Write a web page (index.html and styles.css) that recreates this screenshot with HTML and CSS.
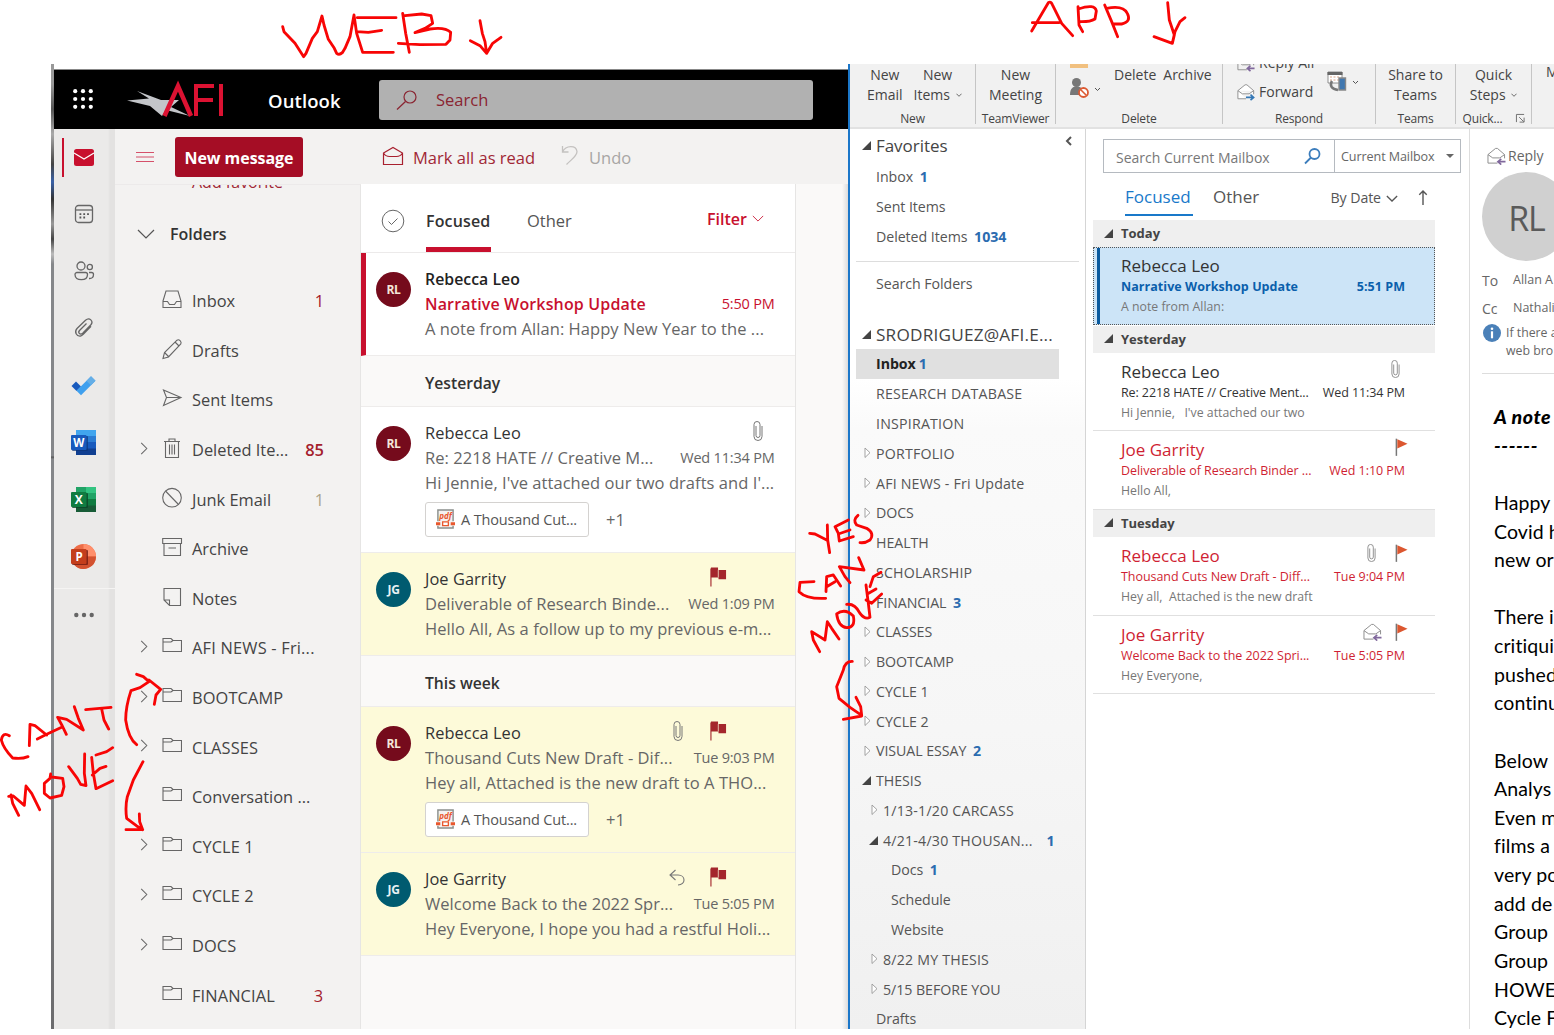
FILE: index.html
```html
<!DOCTYPE html>
<html lang="en">
<head>
<meta charset="utf-8">
<title>Outlook web and app</title>
<link rel="stylesheet" href="styles.css">
</head>
<body>
<svg class="defs" aria-hidden="true">
  <symbol id="folder" viewBox="0 0 20 20"><path d="M1 15.500V2.500h8l2 2h8.500v11zM1 6h8l2-1.500"/></symbol>
  <symbol id="right" viewBox="0 0 8 14"><path d="M1 1l6 6-6 6"/></symbol>
  <symbol id="clip" viewBox="0 0 10 20"><path d="M3 5v9.500a2 2 0 0 0 4 0V3.500a2.500 2.500 0 0 0-6 0v12a4 4 0 0 0 8 0V5"/></symbol>
  <symbol id="flags" viewBox="0 0 18 20"><path d="M1 1v19" fill="none" stroke="#a4262c" stroke-width="1.200"/><path d="M1 0h7.500v2.500H17v10H9V10.500H1z" fill="#a4262c"/><path d="M8.800 2.500v8" stroke="#e9c9b4" stroke-width="1"/></symbol>
  <symbol id="flag" viewBox="0 0 14 19"><path d="M1.500 0v18.500" stroke="#777" stroke-width="1.600"/><path d="M2.500.5L13.500 5.500 2.500 10.500z" fill="#dc5730"/></symbol>
  <symbol id="pdf" viewBox="0 0 20 21"><path d="M2 1h16v19H2z" fill="#f4f2f0"/><path d="M2 13V1h16v12M2 17.500V20h16v-2.500" fill="none" stroke="#8a8f8c" stroke-width="1.500"/><path d="M0 15.500h4.500M15.500 15.500H20" stroke="#e8582e" stroke-width="3"/><path d="M7 13.500h6v4H7z" fill="#fff" stroke="#e8582e" stroke-width="1.400"/><text x="3.500" y="10" font-size="8.500" font-weight="700" font-style="italic" fill="#e8582e" stroke="none" textLength="13">pdf</text></symbol>
  <symbol id="envreply" viewBox="0 0 20 19"><path d="M1 8v9h10M1 8l8-6.500h2L18.500 8v4M1 8l5 3.500h7.500l5-3.500" fill="none" stroke="#8a8a8a"/><path d="M19.500 15.500H12m3-3l-3.500 3 3.500 3" fill="none" stroke="#80689c" stroke-width="1.800"/></symbol>
  <symbol id="closed" viewBox="0 0 7 12"><path d="M1 1v9.500L6 5.700z" fill="#fff" stroke="#999" stroke-width=".9"/></symbol>
  <symbol id="open" viewBox="0 0 10 10"><path d="M10 0v10H0z" fill="#444"/></symbol>
  <symbol id="down" viewBox="0 0 14 8"><path d="M1 1l6 6 6-6"/></symbol>
</svg>

<div class="stage">
<section class="web">
  <header class="web-head">
    <svg class="waffle" viewBox="0 0 20 20"><g fill="#fff"><circle cx="2.200" cy="2.200" r="2.100"/><circle cx="10" cy="2.200" r="2.100"/><circle cx="17.800" cy="2.200" r="2.100"/><circle cx="2.200" cy="10" r="2.100"/><circle cx="10" cy="10" r="2.100"/><circle cx="17.800" cy="10" r="2.100"/><circle cx="2.200" cy="17.800" r="2.100"/><circle cx="10" cy="17.800" r="2.100"/><circle cx="17.800" cy="17.800" r="2.100"/></g></svg>
    <svg class="afi" viewBox="0 0 97 34"><path d="M0 17.500L22 15.500 10 8l24 9h18l-8 7 19 9-24-6-4 6-12-10z" fill="#c3c5c9"/><g fill="none" stroke="#dc1232" stroke-width="4"><path d="M37.500 33L51 3l13 30" stroke-width="4.500"/><path d="M69 33V3h18M69 17h17M94 1v32"/></g></svg>
    <strong class="brand">Outlook</strong>
    <div class="search"><svg viewBox="0 0 21 20"><circle cx="14" cy="7" r="6"/><path d="M9.500 11.500L1 19.500"/></svg><span>Search</span></div>
  </header>
  <div class="web-body">
    <nav class="rail">
      <span class="on"><svg viewBox="0 0 20 17"><rect width="20" height="17" rx="2.500" fill="#c8102e"/><path d="M0 4l10 6 10-6" fill="none" stroke="#fff" stroke-width="1.200"/></svg></span>
      <span><svg viewBox="0 0 20 20"><g fill="none" stroke="#666" stroke-width="1.300"><rect x="1.500" y="1.500" width="17" height="17" rx="3"/><path d="M1.500 6h17"/></g><path d="M5.500 10.200h9.500M5.500 13.500h6" stroke="#555" stroke-width="1.800" stroke-dasharray="1.800 2"/></svg></span>
      <span><svg viewBox="0 0 20 20"><g fill="none" stroke="#666" stroke-width="1.300"><circle cx="7" cy="5" r="4"/><circle cx="15.800" cy="6" r="2.600"/><path d="M3 11.500h8.500a2 2 0 0 1 2 2c0 3.500-2.500 5.200-6.200 5.200S1 17 1 13.500a2 2 0 0 1 2-2zM15 11.500h2.500a2 2 0 0 1 2 2c0 2.800-1.500 4.200-4.500 4"/></g></svg></span>
      <span><svg viewBox="0 0 20 20"><path d="M3 10.500l8.500-8.300c4-3.500 8.500 1 5.200 4.800l-8 8.200c-2.500 2.300-5.200-.5-3.200-2.700l7-7M3 10.500c-3 3.500-.5 8 3.500 7.500 1.500-.3 2-1 3-2l7.500-7.700" fill="none" stroke="#666" stroke-width="1.300"/></svg></span>
      <span class="big"><svg viewBox="0 0 25 25"><path d="M.5 13l4.500-4.500 5 5-4.500 4.500z" fill="#185abd"/><path d="M5.500 17.700L20 3.300l4.500 4.500L10 22.300z" fill="#3fa0ee"/><path d="M15.500 8L20 3.300l4.500 4.500L20 12.300z" fill="#65aee6"/></svg></span>
      <span class="big"><svg viewBox="0 0 25 25"><path d="M5 0h20v7H5z" fill="#41a5ee"/><path d="M5 6h20v7H5z" fill="#2b7cd3"/><path d="M5 12h20v7H5z" fill="#185abd"/><path d="M5 18.500h20V25H5z" fill="#103f91"/><rect x="1" y="6" width="16" height="15" rx="1" fill="#0d3578" opacity=".7"/><rect y="5" width="15.500" height="15" rx="1" fill="#185abd"/><text x="7.700" y="16.700" font-size="11.500" text-anchor="middle" font-weight="700" fill="#fff">W</text></svg></span>
      <span class="big"><svg viewBox="0 0 25 25"><path d="M5 0h10v13H5z" fill="#21a366"/><path d="M15 0h10v7H15z" fill="#33c481"/><path d="M15 6h10v7H15z" fill="#21a366"/><path d="M5 12h20v7H5z" fill="#107c41"/><path d="M5 18.500h20V25H5z" fill="#185c37"/><rect x="1" y="6" width="16" height="15" rx="1" fill="#0b4527" opacity=".8"/><rect y="5" width="15.500" height="15" rx="1" fill="#107c41"/><text x="7.700" y="16.900" font-size="12" text-anchor="middle" font-weight="700" fill="#fff">X</text></svg></span>
      <span class="big"><svg viewBox="0 0 25 25"><circle cx="12.500" cy="12.500" r="12.500" fill="#ed6c47"/><path d="M12.500 0A12.500 12.500 0 0 1 25 12.500H12.500z" fill="#ff8f6b"/><path d="M25 12.500a12.500 12.500 0 0 1-22 8V12.500z" fill="#d35230"/><rect x="1" y="6" width="16" height="15" rx="1" fill="#701a12" opacity=".8"/><rect y="5" width="15.500" height="15" rx="1" fill="#c43e1c"/><text x="8" y="16.800" font-size="11.500" text-anchor="middle" font-weight="700" fill="#fff">P</text></svg></span>
      <span class="more"><svg viewBox="0 0 20 6"><g fill="#666"><circle cx="2.300" cy="3" r="2.200"/><circle cx="10" cy="3" r="2.200"/><circle cx="17.700" cy="3" r="2.200"/></g></svg></span>
    </nav>
    <div class="mail">
      <div class="toolbar">
        <svg class="burger" viewBox="0 0 18 12"><path d="M0 1.500h18M0 6h18M0 10.500h18"/></svg>
        <span class="newmsg">New message</span>
        <svg class="mark" viewBox="0 0 22 20"><path d="M1.500 7L11 1.500 20.500 7v11.500h-19zM1.500 7c2 3.500 4 3.500 6 3.500h7c2 0 4 0 6-3.500"/></svg>
        <span class="tl">Mark all as read</span>
        <svg class="undo" viewBox="0 0 18 20"><path d="M1.500 1v6h6M1.500 7C5 0 15 0 16 6.500 16 11 12 13 5.500 19.500"/></svg>
        <span class="tl dim">Undo</span>
      </div>
      <div class="cols">
        <div class="folders">
          <div class="addfav">Add favorite</div>
          <div class="fhead"><svg viewBox="0 0 18 10"><path d="M1 1l8 8 8-8"/></svg><b>Folders</b></div>
          <div class="f"><i></i><svg viewBox="0 0 20 20"><path d="M1 12L4 2h12l3 10v6.500H1zM1 12.500h4.500l2 3h5l2-3H19"/></svg><span>Inbox</span><em>1</em></div>
          <div class="f"><i></i><svg viewBox="0 0 20 20"><path d="M1 19.500l1.500-6L15 1.200c2-1.500 5 1.500 3.800 3.800L6.500 18zM13 3l4 4M2.500 13.500l4.500 4.500"/></svg><span>Drafts</span></div>
          <div class="f"><i></i><svg viewBox="0 0 20 20"><path d="M1.500 2L19 9.500 1.500 17.500l3-8zM4.500 9.500H19"/></svg><span>Sent Items</span></div>
          <div class="f"><i><svg><use href="#right"/></svg></i><svg viewBox="0 0 20 20"><path d="M2 3.500h16M7 3.500v-2.500h6v2.500M3.500 3.500v16h13v-16M7.500 6.500v10M10 6.500v10M12.500 6.500v10"/></svg><span>Deleted Ite...</span><em class="b">85</em></div>
          <div class="f"><i></i><svg viewBox="0 0 20 20"><circle cx="10" cy="9.700" r="9.300"/><path d="M3.500 3l13 13.500"/></svg><span>Junk Email</span><em class="pale">1</em></div>
          <div class="f"><i></i><svg viewBox="0 0 20 20"><path d="M.7 1.500h18.800v5H.7zM2 6.500v12h16.500v-12M6.500 11h7.500"/></svg><span>Archive</span></div>
          <div class="f"><i></i><svg viewBox="0 0 20 20"><path d="M2 1.500h16.500v17H7.500L2 13zM2 13h5.500v5.500"/></svg><span>Notes</span></div>
          <div class="f"><i><svg><use href="#right"/></svg></i><svg><use href="#folder"/></svg><span class="wide">AFI NEWS - Fri...</span></div>
          <div class="f"><i><svg><use href="#right"/></svg></i><svg><use href="#folder"/></svg><span class="caps">BOOTCAMP</span></div>
          <div class="f"><i><svg><use href="#right"/></svg></i><svg><use href="#folder"/></svg><span class="caps">CLASSES</span></div>
          <div class="f"><i></i><svg><use href="#folder"/></svg><span>Conversation ...</span></div>
          <div class="f"><i><svg><use href="#right"/></svg></i><svg><use href="#folder"/></svg><span class="caps">CYCLE 1</span></div>
          <div class="f"><i><svg><use href="#right"/></svg></i><svg><use href="#folder"/></svg><span class="caps">CYCLE 2</span></div>
          <div class="f"><i><svg><use href="#right"/></svg></i><svg><use href="#folder"/></svg><span class="caps">DOCS</span></div>
          <div class="f"><i></i><svg><use href="#folder"/></svg><span class="caps">FINANCIAL</span><em class="in">3</em></div>
        </div>
        <div class="list">
          <div class="tabs"><svg class="chk" viewBox="0 0 24 24"><circle cx="12" cy="12" r="10.800"/><path d="M7.500 12.500l3 3 6-6"/></svg><b class="sel">Focused</b><span class="oth">Other</span><b class="filter">Filter <svg><use href="#down"/></svg></b></div>
          <article class="m new"><div class="av">RL</div><div class="t"><div><span class="name semi">Rebecca Leo</span></div><div><span class="sub">Narrative Workshop Update</span><time>5:50 PM</time></div><p>A note from Allan: Happy New Year to the ...</p></div></article>
          <div class="band">Yesterday</div>
          <article class="m tall"><div class="av">RL</div><div class="t"><div><span class="name">Rebecca Leo</span><svg class="clip last"><use href="#clip"/></svg></div><div><span>Re: 2218 HATE // Creative M...</span><time>Wed 11:34 PM</time></div><p>Hi Jennie, I've attached our two drafts and I'...</p><div class="att"><span><svg><use href="#pdf"/></svg>A Thousand Cut...</span>+1</div></div></article>
          <article class="m y"><div class="av jg">JG</div><div class="t"><div><span class="name">Joe Garrity</span><svg class="flags"><use href="#flags"/></svg></div><div><span>Deliverable of Research Binde...</span><time>Wed 1:09 PM</time></div><p>Hello All, As a follow up to my previous e-m...</p></div></article>
          <div class="band">This week</div>
          <article class="m y tall"><div class="av">RL</div><div class="t"><div><span class="name">Rebecca Leo</span><svg class="clip"><use href="#clip"/></svg><svg class="flags"><use href="#flags"/></svg></div><div><span>Thousand Cuts New Draft - Dif...</span><time>Tue 9:03 PM</time></div><p>Hey all, Attached is the new draft to A THO...</p><div class="att"><span><svg><use href="#pdf"/></svg>A Thousand Cut...</span>+1</div></div></article>
          <article class="m y"><div class="av jg">JG</div><div class="t"><div><span class="name">Joe Garrity</span><svg class="back" viewBox="0 0 16 17"><path d="M6.500 1L1 6l5.500 5M1 6h8c8 0 8 10 0 10"/></svg><svg class="flags"><use href="#flags"/></svg></div><div><span>Welcome Back to the 2022 Spr...</span><time>Tue 5:05 PM</time></div><p>Hey Everyone, I hope you had a restful Holi...</p></div></article>
        </div>
        <div class="gutter"></div>
      </div>
    </div>
  </div>
</section>

<section class="app">
  <div class="ribbon">
    <div class="g g1"><div class="gb"><span>New<br>Email</span><span class="it">New<br>Items <svg><use href="#down"/></svg></span></div><small>New</small></div>
    <div class="g g2"><div class="gb"><span>New<br>Meeting</span></div><small>TeamViewer</small></div>
    <div class="g g3"><div class="gb"><svg class="ign" viewBox="0 0 34 36"><path d="M1 0h18v4H1z" fill="#f1c07f"/><circle cx="7.500" cy="18.500" r="4.500" fill="#777"/><path d="M1 31c0-7 3-8.500 7-8.500s6 2 6 8.500z" fill="#777"/><circle cx="14.500" cy="28.500" r="4.500" fill="#fff" stroke="#dc5a33" stroke-width="1.800"/><path d="M11.500 25.500l6 6" stroke="#dc5a33" stroke-width="1.600"/><path d="M26 24l2.500 2.500L31 24" fill="none" stroke="#555"/></svg><span>Delete</span><span>Archive</span></div><small>Delete</small></div>
    <div class="g g4"><div class="gb"><div class="rf"><p><svg><use href="#envreply"/></svg>Reply All</p><p><svg viewBox="0 0 20 19"><path d="M1 8v9h9M1 8l8-6.500h2L18.500 8v4M1 8l5 3.500h7.500l5-3.500" fill="#fff" stroke="#8a8a8a"/><path d="M10 15.500h8m-3-3l3.500 3-3.500 3" fill="none" stroke="#3377b5" stroke-width="1.800"/></svg>Forward</p></div><svg class="mt" viewBox="0 0 34 22"><path d="M1 1h14v11H1z" fill="#fff" stroke="#777" stroke-width=".8"/><path d="M.5 2.500h15" stroke="#666" stroke-width="3"/><path d="M3 6h10M3 9h10" stroke="#e0a98c" stroke-width="1.200" stroke-dasharray="2 1.500"/><path d="M5 10c-3 5 0 8 6 9" fill="none" stroke="#777" stroke-width="2.500"/><path d="M12 7h6.500v12H12z" fill="#4178b0" stroke="#888" stroke-width="1.400"/><path d="M26 10l2.500 2.500L31 10" fill="none" stroke="#555"/></svg></div><small>Respond</small></div>
    <div class="g g5"><div class="gb"><span>Share to<br>Teams</span></div><small>Teams</small></div>
    <div class="g g6"><div class="gb"><span>Quick<br>Steps <svg><use href="#down"/></svg></span></div><small>Quick... <svg class="dlg" viewBox="0 0 10 10"><path d="M.5 9V.5H9M3.500 3.500l5 5M9 4v5H4" fill="none" stroke="#666"/></svg></small></div>
    <div class="g g7">M</div>
  </div>
  <div class="app-body">
    <nav class="tree">
      <div class="big"><svg class="o"><use href="#open"/></svg>Favorites<svg class="col" viewBox="0 0 7 10"><path d="M6 1L2 5l4 4" fill="none" stroke="#555" stroke-width="2"/></svg></div>
      <div>Inbox <b>1</b></div><div>Sent Items</div><div>Deleted Items <b>1034</b></div>
      <hr>
      <div class="sf">Search Folders</div>
      <div class="big acct"><svg class="o"><use href="#open"/></svg>SRODRIGUEZ@AFI.E...</div>
      <div class="cur"><strong>Inbox</strong> <b>1</b></div>
      <div class="u">RESEARCH DATABASE</div><div class="u">INSPIRATION</div>
      <div class="u"><svg class="c"><use href="#closed"/></svg>PORTFOLIO</div>
      <div class="u"><svg class="c"><use href="#closed"/></svg>AFI NEWS - Fri Update</div>
      <div><svg class="c"><use href="#closed"/></svg>DOCS</div>
      <div>HEALTH</div><div class="u">SCHOLARSHIP</div><div>FINANCIAL <b>3</b></div>
      <div><svg class="c"><use href="#closed"/></svg>CLASSES</div>
      <div><svg class="c"><use href="#closed"/></svg>BOOTCAMP</div>
      <div><svg class="c"><use href="#closed"/></svg>CYCLE 1</div>
      <div><svg class="c"><use href="#closed"/></svg>CYCLE 2</div>
      <div><svg class="c"><use href="#closed"/></svg>VISUAL ESSAY <b>2</b></div>
      <div><svg class="o"><use href="#open"/></svg>THESIS</div>
      <div class="l1 u"><svg class="c"><use href="#closed"/></svg>1/13-1/20 CARCASS</div>
      <div class="l1 u"><svg class="o"><use href="#open"/></svg>4/21-4/30 THOUSAN... <b class="far">1</b></div>
      <div class="l2">Docs <b>1</b></div><div class="l2">Schedule</div><div class="l2">Website</div>
      <div class="l1 u"><svg class="c"><use href="#closed"/></svg>8/22 MY THESIS</div>
      <div class="l1"><svg class="c"><use href="#closed"/></svg>5/15 BEFORE YOU</div>
      <div>Drafts</div>
    </nav>
    <div class="inbox">
      <div class="sbox"><span>Search Current Mailbox</span><svg viewBox="0 0 17 17"><circle cx="10.500" cy="6" r="5"/><path d="M7 9.500L1 15.500"/></svg><div>Current Mailbox<i></i></div></div>
      <div class="atabs"><b>Focused</b><span>Other</span><em>By Date</em><svg class="dn"><use href="#down"/></svg><svg class="up" viewBox="0 0 10 16"><path d="M5 16V1M1 5l4-4 4 4"/></svg></div>
      <div class="aband"><svg><use href="#open"/></svg>Today</div>
      <article class="a picked"><div class="n">Rebecca Leo</div><div class="s"><span>Narrative Workshop Update</span><time>5:51 PM</time></div><p>A note from Allan:</p></article>
      <div class="aband"><svg><use href="#open"/></svg>Yesterday</div>
      <article class="a"><div class="n">Rebecca Leo<svg class="ac end"><use href="#clip"/></svg></div><div class="s"><span>Re: 2218 HATE // Creative Ment...</span><time>Wed 11:34 PM</time></div><p>Hi Jennie, &nbsp; I've attached our two</p></article>
      <article class="a red"><div class="n">Joe Garrity<svg class="af"><use href="#flag"/></svg></div><div class="s"><span>Deliverable of Research Binder ...</span><time>Wed 1:10 PM</time></div><p>Hello All,</p></article>
      <div class="aband"><svg><use href="#open"/></svg>Tuesday</div>
      <article class="a red"><div class="n">Rebecca Leo<svg class="ac"><use href="#clip"/></svg><svg class="af"><use href="#flag"/></svg></div><div class="s"><span>Thousand Cuts New Draft - Diff...</span><time>Tue 9:04 PM</time></div><p>Hey all,&nbsp; Attached is the new draft</p></article>
      <article class="a red"><div class="n">Joe Garrity<svg class="ae"><use href="#envreply"/></svg><svg class="af"><use href="#flag"/></svg></div><div class="s"><span>Welcome Back to the 2022 Spri...</span><time>Tue 5:05 PM</time></div><p>Hey Everyone,</p></article>
    </div>
    <div class="read">
      <div class="rp"><svg><use href="#envreply"/></svg>Reply</div>
      <div class="face">RL</div>
      <div class="to"><span>To</span>Allan A</div>
      <div class="to cc"><span>Cc</span>Nathali</div>
      <div class="info"><svg viewBox="0 0 18 18"><circle cx="9" cy="9" r="9" fill="#4a80b8"/><circle cx="9" cy="4.700" r="1.300" fill="#fff"/><path d="M9 7.300v7" stroke="#fff" stroke-width="2.200"/></svg><p>If there a<br>web bro</p></div>
      <div class="msg"><strong>A note<br>------</strong><br><br>Happy<br>Covid h<br>new or<br><br>There i<br>critiqui<br>pushed<br>continu<br><br>Below<br>Analys<br>Even m<br>films a<br>very po<br>add de<br>Group<br>Group<br>HOWE<br>Cycle F</div>
    </div>
  </div>
</section>
</div>

<svg class="ink" viewBox="0 0 1554 1035">
  <g transform="scale(.33333)">
    <path d="M848 80L852 95 885 130 911 170 918 160 937 115 952 95 966 48 972 75 985 118 1003 145 1010 160Q1018 166 1027 158L1035 145 1050 110 1062 45 1070 100 1088 157H1180M1072 53H1188M1070 95L1105 97 1145 91M1208 40L1217 100 1228 157M1215 47L1265 42 1293 47 1298 70 1275 85 1245 98 1290 87Q1335 80 1352 97L1350 120 1338 133 1260 134 1195 130"/>
    <path d="M1440 62L1447 100 1455 125 1460 160M1411 122L1440 137 1460 160 1478 130 1503 112"/>
  </g>
  <g transform="translate(840 0) scale(.33333)">
    <path d="M575 93L605 42 625 8Q632 3 637 14L665 70 698 107M577 68H657M714 20L717 75 728 95M715 27Q765 10 769 33L765 57Q750 66 720 65M794 15L815 65 833 110M800 25Q850 15 862 40 875 65 845 72H820M983 8L988 60 1003 105 997 130M942 110L997 130 1005 95 1020 65 1035 53"/>
  </g>
  <g transform="translate(0 640) scale(.33333)">
    <path d="M28 287Q8 275 4 300 10 325 38 354 65 358 84 350M88 317L90 253 105 257 140 285M112 297L140 283 185 262M199 283L187 258 173 232 200 238 250 270 235 235 223 200M257 209L333 202M305 207L312 240 326 267M56 526L38 490 33 465M26 469L40 468 73 496 78 438 95 460 119 509M152 402L150 415 133 430V460L150 474 185 466 192 440 188 415 155 411M206 380L232 415 242 433 258 437 253 400 254 342M275 352L280 400 288 446 338 422M277 405L300 385 318 379M288 345L320 335 338 323"/>
    <path d="M410 314Q385 295 377 240 377 200 393 152L420 143 447 125 430 110 410 103M447 120L482 148 468 165 463 193M429 365L400 420 382 470Q375 500 380 535L410 558 428 569H378M428 569L419 545 418 522"/>
  </g>
  <g transform="translate(790 310) scale(.33333)">
    <path d="M59 670L75 672 110 690M112 645L113 690 119 728M175 630L135 650 145 670 148 693 190 680M145 672L180 660M204 616Q187 630 200 645L230 655Q255 670 240 690 225 700 210 698M72 815L30 817 27 845Q50 868 107 865M108 845L110 800 130 795 152 828M110 830L135 815M180 818L165 800 148 770 222 780 206 743M89 1025L70 990 65 965 105 990 112 935 125 955 147 987M140 912Q145 950 170 953 197 953 190 918 165 893 140 912M170 883Q195 880 210 910 225 930 240 922L235 880 228 825M228 870L245 880 275 852M232 852L258 837M240 830L250 800 273 787"/>
    <path d="M187 1054Q165 1053 160 1080L140 1130 147 1165 180 1192 215 1216 212 1190 198 1162M215 1218L160 1228"/>
  </g>
</svg>
</body>
</html>
```
FILE: styles.css
```css
* { box-sizing: border-box; }
body { margin: 0; width: 1554px; height: 1035px; overflow: hidden; background: #fff; font-family: "Open Sans", "Noto Sans", sans-serif; position: relative; }
p { margin: 0; }
svg { display: block; flex: none; overflow: visible; }
.defs { position: absolute; width: 0; height: 0; overflow: hidden; }
.ink { position: absolute; left: 0; top: 0; width: 1554px; height: 1035px; pointer-events: none; }
.ink path { fill: none; stroke: #f80505; stroke-width: 8.5; stroke-linecap: round; stroke-linejoin: round; }
.stage { margin-left: 51px; padding-top: 64px; height: 1029px; display: flex; overflow: hidden; }

/* browser window */
.web { width: 797px; padding: 5px 0 0 3px; display: flex; flex-direction: column; flex: none; background: linear-gradient(#999 0 20px, #555 45px, #aaa 70px, #444 100px, #3a62a8 118px, #333 135px, #999 160px, #444 175px, #bbb 190px, #85878a 200px 392px, #555 393px, #85878a 395px 660px, #6b6b6d 100%) 0 0 / 3px 100% no-repeat; }
.web-head { height: 60px; background: #000; border-top: 1px solid #888; display: flex; align-items: center; flex: none; }
.waffle { width: 20px; height: 20px; margin: -2px 0 0 19px; }
.afi { width: 97px; height: 34px; margin-left: 34px; }
.brand { color: #fff; font-size: 18.500px; font-weight: 600; width: 111px; margin-left: 44px; padding-top: 1px; letter-spacing: .1px; }
.search { width: 434px; height: 40px; background: #b1b1b1; border-radius: 3px; display: flex; align-items: center; color: #8a2532; font-size: 16.500px; }
.search svg { width: 21px; height: 20px; margin: 0 19px 0 17px; fill: none; stroke: #8a2532; stroke-width: 1.2; }
.web-body { flex: 1; display: flex; min-height: 0; }
.rail { width: 61px; background: linear-gradient(90deg, #ebeae9 0 54px, #e3e2e1 56px); flex: none; }
.rail span { display: flex; height: 57px; align-items: center; padding: 0 0 1px 20px; }
.rail svg { width: 20px; height: 20px; }
.rail .on svg { height: 17px; }
.rail .on { background: linear-gradient(#c8102e, #c8102e) 8px 9px / 2px 39px no-repeat; }
.rail .big { padding-left: 17px; }
.rail .big svg { width: 25px; height: 25px; }
.rail .more { border-top: 1px solid #f5f4f3; margin-top: 3px; height: 54px; }
.rail .more svg { height: 6px; }
.mail { flex: 1; display: flex; flex-direction: column; }
.toolbar { height: 55px; background: #f3f2f1; display: flex; align-items: center; font-size: 16.500px; color: #a12836; flex: none; }
.toolbar svg { fill: none; }
.tl { padding-top: 2px; }
.burger { width: 18px; height: 12px; margin: 0 21px; stroke: #d5506a; }
.newmsg { width: 128px; height: 40px; line-height: 42px; background: #a50d25; color: #fff; font-weight: 700; border-radius: 3px; text-align: center; letter-spacing: -.05px; font-size: 16px; }
.mark { width: 22px; height: 20px; margin: 0 9px 2px 79px; stroke: #a8202f; stroke-width: 1.2; }
.undo { width: 18px; height: 20px; margin: 0 10px 3px 26px; stroke: #c4c2c0; stroke-width: 1.3; }
.dim { color: #a8a6a4; }
.cols { flex: 1; display: flex; min-height: 0; overflow: hidden; }
.folders { width: 246px; background: #f3f2f1; border-top: 1px solid #eceaea; border-right: 1px solid #e6e5e4; overflow: hidden; flex: none; font-size: 16.400px; color: #444; clip-path: inset(0); }
.addfav { height: 22px; line-height: 22px; margin: -14px 0 0 77px; color: #a12836; width: 120px; font-size: 16px; }
.fhead { height: 50px; margin: 15.500px 0 17.500px 22px; display: flex; align-items: center; gap: 15px; color: #333; }
.fhead b { font-weight: 600; font-size: 16px; }
.fhead svg { width: 18px; height: 10px; fill: none; stroke: #555; stroke-width: 1.2; }
.f { height: 49.600px; display: flex; align-items: center; padding-left: 25px; }
.f i { width: 22px; }
.f i svg { width: 8px; height: 13px; margin: 0 0 3px; }
.f > svg { width: 20px; height: 20px; margin: 0 10px 3px 0; }
.f svg { fill: none; stroke: #666; stroke-width: 1.1; }
.f span { flex: 1; white-space: nowrap; }
.caps { letter-spacing: .1px; }
.wide { letter-spacing: .2px; }
.f em { font-style: normal; color: #a4202c; margin-right: 36px; font-weight: 500; }
.f em.in { margin-right: 37px; }
.f em.b { font-weight: 600; }
.f em.pale { color: #aaa389; }
.list { width: 435px; border-right: 1px solid #e6e5e4; flex: none; display: flex; flex-direction: column; background: #faf9f8; }
.tabs { height: 69px; background: #fff; border-bottom: 1px solid #eceaea; display: flex; font-size: 16px; line-height: 74px; padding-left: 20px; color: #555; flex: none; }
.chk { width: 24px; height: 24px; margin: 25px 21px 0 0; fill: none; stroke: #666; }
.sel { color: #333; font-weight: 600; height: 68px; border-bottom: 5px solid #c8102e; width: 65px; letter-spacing: .15px; }
.oth { margin-left: 36px; flex: 1; font-size: 16.500px; }
.filter { color: #c8102e; font-weight: 600; display: flex; align-items: center; gap: 5px; line-height: 70px; margin: 1px 31px 0 0; }
.filter svg { width: 12px; height: 7px; fill: none; stroke: #c8102e; }
.m { height: 102.500px; background: #fff; border-bottom: 1px solid #eeeceb; display: flex; padding: 13px 20.500px 0 15px; flex: none; font-size: 16.500px; color: #666; letter-spacing: .05px; }
.tall { height: 146.500px; }
.y { background: #fdfad9; }
.new { border-left: 5px solid #c8102e; padding-left: 10px; }
.av { width: 35px; height: 35px; border-radius: 50%; background: #750b1c; color: #f4e7d9; font-size: 12px; font-weight: 700; line-height: 35px; text-align: center; margin: 6px 14px 0 0; letter-spacing: -.4px; flex: none; }
.jg { background: #005b70; color: #e9f2f4; }
.t { flex: 1; min-width: 0; }
.t > div, .t > p { height: 25px; line-height: 26px; display: flex; white-space: nowrap; }
.t > div > span:first-child { flex: 1; }
.name { color: #333; font-size: 16.400px; }
.semi { font-weight: 600; color: #222; font-size: 15.800px; }
.t .sub { color: #c8102e; font-weight: 600; letter-spacing: .15px; font-size: 16px; }
.t time { font-size: 14.500px; letter-spacing: -.2px; }
.new time { color: #c8102e; }
.clip { width: 10px; height: 20px; margin: 1px 26.500px 0 0; fill: none; stroke: #777; }
.clip.last { margin-right: 12px; }
.flags { width: 17px; height: 20px; margin: 1px 48px 0 0; }
.back { width: 16px; height: 17px; margin: 3px 25px 0 0; fill: none; stroke: #777; stroke-width: 1.1; }
.t > .att { height: 35px; line-height: 33px; margin-top: 7px; align-items: center; gap: 17px; font-size: 16.500px; }
.t > .att > span:first-child { flex: none; width: 164px; height: 35px; border: 1px solid #d4d2d0; border-radius: 3px; background: #fff; display: flex; align-items: center; padding-left: 10px; gap: 6px; color: #555; font-size: 14.500px; letter-spacing: -.15px; }
.att svg { width: 19px; height: 20px; }
.band { height: 51px; line-height: 54px; border-bottom: 1px solid #eeeceb; padding-left: 64px; font-weight: 600; font-size: 15.700px; color: #333; flex: none; }
.gutter { flex: 1; background: linear-gradient(90deg, #faf9f8 0 46px, #dcdcdc); }

/* desktop window */
.app { flex: 1; border-left: 2px solid #1b77c9; display: flex; flex-direction: column; min-width: 0; overflow: hidden; }
.ribbon { height: 65px; background: #f1f1f1; border-bottom: 2px solid #e2e2e2; display: flex; flex: none; font-size: 14px; line-height: 20px; color: #444; overflow: hidden; }
.g { display: flex; flex-direction: column; text-align: center; border-right: 1px solid #c5c5c5; height: 60px; flex: none; overflow: visible; }
.gb { height: 45px; display: flex; justify-content: center; }
.g span { white-space: nowrap; padding-top: 1px; }
.g span svg { display: inline-block; width: 6px; height: 4px; margin: 0 0 3px 2px; fill: none; stroke: #555; stroke-width: 2; }
.g small { font-size: 12px; line-height: 20px; height: 14px; white-space: nowrap; letter-spacing: -.15px; }
.g1 { width: 126px; } .g1 .gb { justify-content: flex-start; gap: 11px; padding-left: 17px; }
.g2 { width: 80px; } .g3 { width: 167px; } .g4 { width: 153px; } .g5 { width: 80px; } .g6 { width: 76px; }
.g3 .gb { justify-content: flex-start; gap: 7px; padding-left: 13px; }
.ign { width: 34px; height: 36px; margin-right: 4px; }
.rf { padding-left: 14px; width: 104px; margin-top: -16px; }
.rf p { display: flex; align-items: center; gap: 4px; height: 29px; white-space: nowrap; }
.rf svg { width: 18px; height: 18px; }
.g4 .gb { justify-content: flex-start; }
.mt { width: 34px; height: 22px; margin-top: 7px; }
.dlg { display: inline-block; width: 9px; height: 9px; margin-left: 10px; }
.g7 { border: 0; padding-left: 14px; line-height: 16px; }
.app-body { flex: 1; display: flex; min-height: 0; overflow: hidden; }
.tree { width: 236px; flex: none; border-right: 1px solid #d5d5d5; background: linear-gradient(#fff 0 250px, #fafafa 300px, #f6f6f6 600px, #f0f0f0 900px); font-size: 14.200px; color: #555; padding-top: 1px; overflow: hidden; }
.tree div { height: 29.770px; display: flex; align-items: center; padding-left: 26px; white-space: pre; flex: none; letter-spacing: -.05px; }
.tree div.u { letter-spacing: .2px; }
.tree b { color: #2b6cb0; margin-left: 3px; letter-spacing: -.05px; }
.tree .big { height: 32px; font-size: 17px; color: #444; padding-bottom: 2px; }
.tree .acct { height: 30px; margin-top: 21px; letter-spacing: .2px; font-size: 17.200px; padding-bottom: 0; }
.tree svg.o { width: 9px; height: 9px; margin: 0 5px 0 -14px; }
.tree svg.c { width: 7px; height: 12px; margin: 0 5px 0 -12px; }
.tree .col { width: 7px; height: 10px; margin: -9px 0 0 118px; }
.tree hr { margin: 10px 6px 6px; border: 0; border-top: 1px solid #ddd; }
.tree .cur { background: #e0e0e0; margin: 0 26px 0 6px; padding-left: 20px; color: #222; }
.tree .l1 { padding-left: 33px; }
.tree .l2 { padding-left: 41px; }
.tree .far { margin-left: 10px; }
.inbox { width: 384px; border-right: 1px solid #ddd; flex: none; background: #fff; }
.sbox { width: 358px; height: 34px; margin: 10px 0 0 17px; border: 1px solid #b5bac0; display: flex; align-items: center; font-size: 14px; color: #777; padding-left: 12px; }
.sbox span { flex: 1; padding-top: 3px; }
.sbox svg { width: 17px; height: 17px; margin-right: 13px; fill: none; stroke: #3c7dbc; stroke-width: 1.800; }
.sbox div { border-left: 1px solid #b5bac0; width: 126px; height: 32px; line-height: 33px; padding-left: 6px; font-size: 12.600px; display: flex; align-items: center; justify-content: space-between; letter-spacing: -.1px; color: #666; }
.sbox i { border: 4px solid transparent; border-top-color: #666; border-bottom: 0; margin-right: 6px; }
.atabs { height: 47px; display: flex; padding-left: 39px; align-items: flex-start; font-size: 17px; color: #555; line-height: 47px; }
.atabs b { color: #1979ca; font-weight: 400; width: 68px; height: 43px; border-bottom: 2px solid #1979ca; }
.atabs span { margin-left: 20px; }
.atabs em { font-style: normal; font-size: 14.200px; margin-left: auto; line-height: 49px; letter-spacing: -.1px; }
.atabs svg { fill: none; stroke: #555; stroke-width: 1.500; }
.dn { width: 12px; height: 7px; margin: 22px 20px 0 5px; }
.up { width: 10px; height: 15px; margin: 17px 41px 0 0; }
.aband { width: 342px; margin-left: 7px; height: 27px; background: #efefef; display: flex; align-items: center; font-size: 13px; font-weight: 700; color: #444; padding-bottom: 1px; }
.aband svg { width: 9px; height: 9px; margin: 0 8px 0 11px; }
.a { width: 342px; margin-left: 7px; height: 78.700px; border-bottom: 1px solid #e0e0e0; padding: 8px 30px 0 28px; color: #333; }
.picked { height: 78px; background: #cce4f7; border: 1px dotted #555; box-shadow: inset 3px 0 #cce4f7, inset 6px 0 #0a5a9e; padding: 7px 29px 0 27px; margin-bottom: .5px; }
.n { font-size: 17px; height: 22px; line-height: 21px; display: flex; }
.s { font-size: 12.500px; height: 20px; line-height: 20px; display: flex; justify-content: space-between; white-space: nowrap; letter-spacing: -.1px; }
.a p { font-size: 12.300px; line-height: 20px; color: #777; letter-spacing: 0; }
.picked .s { color: #0a5fac; font-weight: 700; letter-spacing: .05px; }
.red .n, .red .s { color: #cf1f33; }
.red .s { letter-spacing: -.05px; }
.af { width: 13px; height: 19px; margin: -1px -3px 0 0; }
.ac { width: 9px; height: 18px; fill: none; stroke: #888; margin: -1px 19px 0 auto; }
.ac.end { margin-right: 5px; }
.ae { width: 19px; height: 18px; margin: -1px 13px 0 auto; }
.n .af:nth-child(1) { margin-left: auto; }
.read { flex: 1; min-width: 0; overflow: hidden; padding: 15px 0 0 12px; color: #666; white-space: nowrap; }
.rp { display: flex; gap: 2px; align-items: center; font-size: 14px; height: 23px; padding-left: 5px; }
.rp svg { width: 19px; height: 18px; }
.face { width: 89px; height: 89px; border-radius: 50%; background: #d0d0d0; font-size: 34px; line-height: 92px; text-align: center; margin-top: 5px; color: #5a5a5a; letter-spacing: -1px; }
.to { font-size: 12.500px; height: 28px; line-height: 28px; margin-top: 5px; display: flex; }
.to span { font-size: 14px; width: 31px; line-height: 30px; flex: none; }
.cc { margin-top: 0; }
.info { display: flex; gap: 5px; font-size: 12.300px; line-height: 17.500px; width: 100px; height: 52px; border-bottom: 1px solid #ddd; }
.info svg { width: 18px; height: 18px; margin: 2px 0 0 1px; }
.info p { padding-top: 2px; }
.msg { margin: 29px 0 0 12px; color: #000; font-family: Lato, "Open Sans", sans-serif; font-size: 19.500px; line-height: 28.630px; letter-spacing: .1px; }
.msg strong { font-style: italic; font-weight: 900; letter-spacing: .6px; }
```
